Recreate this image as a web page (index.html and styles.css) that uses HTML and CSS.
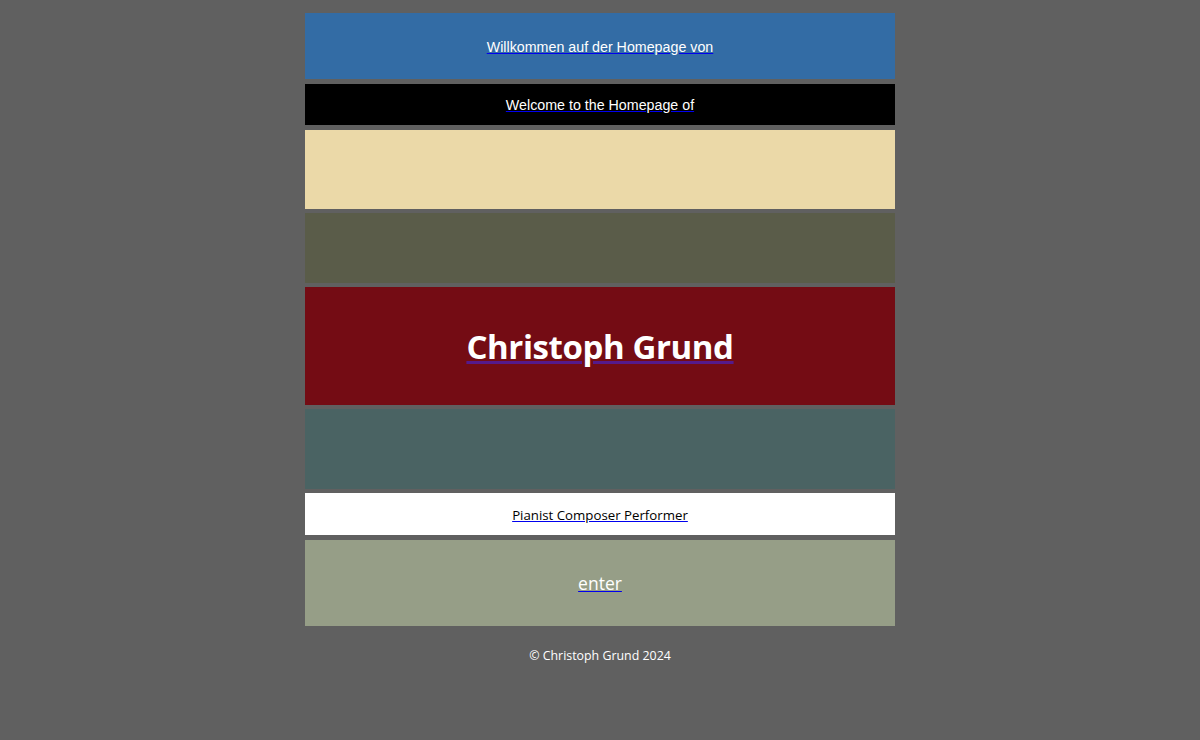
FILE: index.html
```html
<!DOCTYPE html>
<html lang="de">
<head>
<meta charset="utf-8">
<title>Christoph Grund</title>
<link rel="stylesheet" href="styles.css">
</head>
<body>
<div class="page">
  <a class="band band-blue arial" href="#"><span class="txt-white">Willkommen auf der Homepage von</span></a>
  <a class="band band-black arial" href="#"><span class="txt-white">Welcome to the Homepage of</span></a>
  <div class="band band-beige"></div>
  <div class="band band-olive"></div>
  <a class="band band-red title visited" href="#"><span class="txt-white">Christoph Grund</span></a>
  <div class="band band-teal"></div>
  <a class="band band-white sub" href="#"><span class="txt-black">Pianist Composer Performer</span></a>
  <a class="band band-sage enter" href="#"><span class="txt-white">enter</span></a>
  <div class="footer">© Christoph Grund 2024</div>
</div>
</body>
</html>
```
FILE: styles.css
```css
html, body {
  margin: 0;
  padding: 0;
  background: #606060;
}
body {
  font-family: "Open Sans", "Noto Sans", sans-serif;
}
.page {
  width: 590px;
  margin: 0 auto;
  padding-top: 13px;
  display: flex;
  flex-direction: column;
}
.band {
  box-sizing: border-box;
  display: flex;
  align-items: center;
  justify-content: center;
  color: #1a0dab;
  text-decoration: underline;
  text-decoration-color: #0000ee;
}
.visited { text-decoration-color: #551a8b; }
.txt-white { color: #ffffff; }
.txt-black { color: #000000; }
.arial {
  font-family: "Liberation Sans", Arial, sans-serif;
  font-size: 14.25px;
}
.band-blue { background: #336ca5; height: 66px; margin-bottom: 5px; padding-top: 2px; }
.band-black { background: #000000; height: 41px; margin-bottom: 5px; }
.band-beige { background: #ebd9a8; height: 79px; margin-bottom: 4px; }
.band-olive { background: #5a5c49; height: 70px; margin-bottom: 4px; }
.band-red { background: #740c14; height: 118px; margin-bottom: 4px; }
.band-teal { background: #4a6363; height: 80px; margin-bottom: 4px; }
.band-white { background: #ffffff; height: 42px; margin-bottom: 5px; padding-top: 2px; }
.band-sage { background: #969e87; height: 86px; }
.title {
  font-size: 33px;
  font-weight: 700;
  letter-spacing: -0.4px;
}
.sub {
  font-size: 13.25px;
}
.enter {
  font-size: 17.5px;
}
.footer {
  color: #ffffff;
  font-size: 12.4px;
  text-align: center;
  padding-top: 21px;
}
```
